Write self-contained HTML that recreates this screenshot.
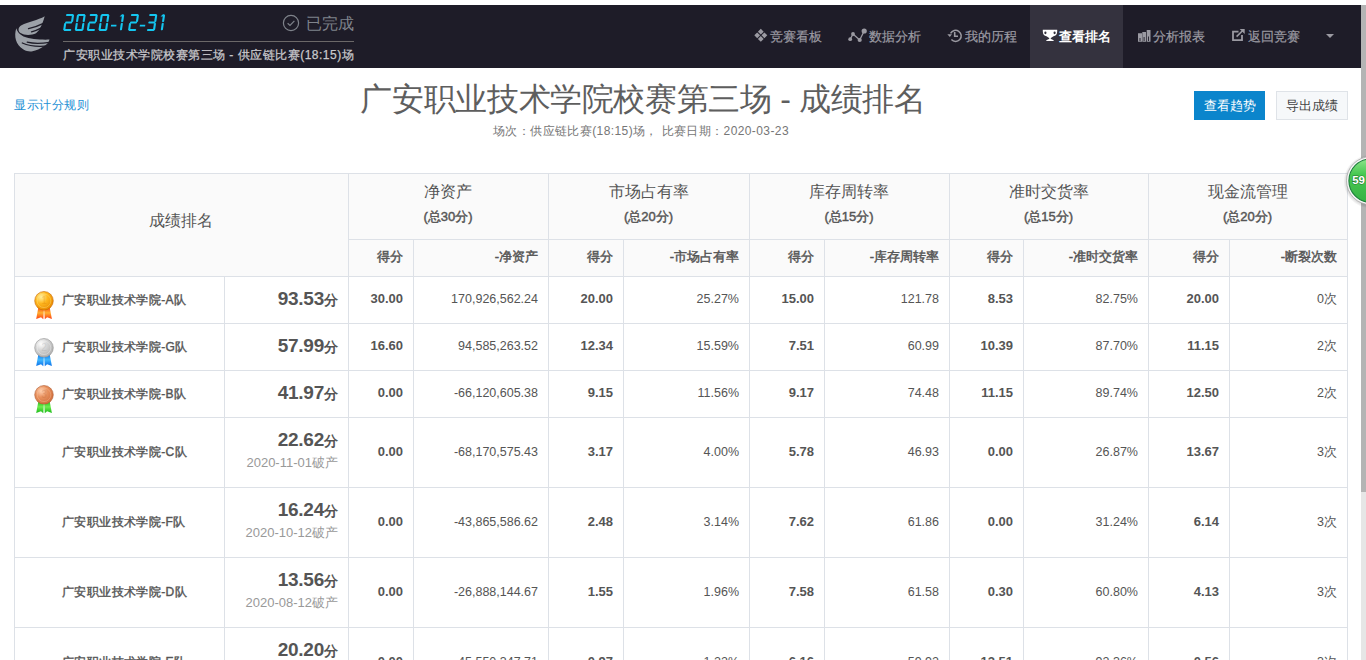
<!DOCTYPE html>
<html><head><meta charset="utf-8"><style>
*{margin:0;padding:0;box-sizing:border-box}
html,body{width:1366px;height:660px;overflow:hidden;background:#fff;font-family:"Liberation Sans", sans-serif}
.a{position:absolute;white-space:nowrap}
.hl{position:absolute;height:1px;background:#dde1e7}
.vl{position:absolute;width:1px;background:#dde1e7}
.r{text-align:right}
.c{text-align:center}
</style></head><body>

<div class="a" style="left:0;top:5px;width:1361px;height:63px;background:#1e1c28"></div>
<div class="a" style="left:1030px;top:5px;width:93px;height:63px;background:#34323e"></div>
<div class="a" style="left:1361px;top:5px;width:5px;height:655px;background:#e6e6e6"></div>
<div class="a" style="left:1361px;top:5px;width:5px;height:487px;background:#b4b4b4"></div>
<svg class="a" style="left:10px;top:12px" width="44" height="44" viewBox="0 0 44 44">
<g fill="#9ca1a8">
<path d="M34.7 4.3 C28 8.2 18 10.2 11.5 13.2 C8 15 7.6 19 10.5 21 C14.5 23.6 21.5 23.4 26 21.2 C29.5 18.8 32.2 13 34.7 4.3Z"/>
<path d="M6.3 16.3 C3.8 24 5.5 33 13.5 37.5 C16.5 39.3 19.5 39.8 22.5 39.3 C26 38.5 30.5 36.5 33.5 34.4 C35.5 33 37.5 31.5 38.2 30.4 C38.8 29.5 39.3 28.5 39.5 27.6 C31 27.8 20.5 27.5 13.5 24.5 C9.5 22.6 7.3 19.8 6.3 16.3Z"/>
</g>
<g fill="none" stroke="#1e1c28" stroke-width="1.3" stroke-linecap="round">
<path d="M18.5 16.6 C23 15.6 29 13.8 34 11.2"/>
<path d="M21.5 19.9 C24 19.2 28 17.6 31.5 15.8"/>
<path d="M12.3 31 C18 33.6 26 34.8 35 34.2"/>
<path d="M17.2 30.2 C22 31.4 30 31.8 39.5 30.4"/>
</g></svg>
<svg class="a" style="left:0;top:0" width="180" height="40" fill="#14c6f0"><polygon points="65.89,15.05 66.75,14.00 73.05,14.00 73.59,15.05 72.73,16.10 66.44,16.10"/><polygon points="73.11,14.60 74.06,15.30 73.12,21.50 71.97,22.20 71.02,21.50 71.95,15.30"/><polygon points="64.98,22.50 65.83,21.45 71.73,21.45 72.28,22.50 71.42,23.55 65.52,23.55"/><polygon points="65.28,22.80 66.22,23.50 65.29,29.70 64.14,30.40 63.20,29.70 64.12,23.50"/><polygon points="63.66,29.95 64.52,28.90 70.81,28.90 71.36,29.95 70.50,31.00 64.20,31.00"/><polygon points="77.49,15.05 78.35,14.00 84.65,14.00 85.19,15.05 84.33,16.10 78.03,16.10"/><polygon points="84.71,14.60 85.66,15.30 84.72,21.50 83.57,22.20 82.62,21.50 83.55,15.30"/><polygon points="83.48,22.80 84.42,23.50 83.49,29.70 82.34,30.40 81.39,29.70 82.32,23.50"/><polygon points="75.26,29.95 76.11,28.90 82.41,28.90 82.96,29.95 82.10,31.00 75.80,31.00"/><polygon points="76.88,22.80 77.82,23.50 76.89,29.70 75.74,30.40 74.79,29.70 75.72,23.50"/><polygon points="78.11,14.60 79.05,15.30 78.12,21.50 76.97,22.20 76.02,21.50 76.95,15.30"/><polygon points="89.59,15.05 90.45,14.00 96.75,14.00 97.29,15.05 96.44,16.10 90.14,16.10"/><polygon points="96.81,14.60 97.76,15.30 96.83,21.50 95.67,22.20 94.72,21.50 95.66,15.30"/><polygon points="88.68,22.50 89.53,21.45 95.43,21.45 95.98,22.50 95.12,23.55 89.22,23.55"/><polygon points="88.98,22.80 89.92,23.50 88.99,29.70 87.84,30.40 86.89,29.70 87.83,23.50"/><polygon points="87.36,29.95 88.22,28.90 94.52,28.90 95.06,29.95 94.20,31.00 87.90,31.00"/><polygon points="101.19,15.05 102.05,14.00 108.35,14.00 108.89,15.05 108.03,16.10 101.73,16.10"/><polygon points="108.41,14.60 109.36,15.30 108.42,21.50 107.27,22.20 106.32,21.50 107.25,15.30"/><polygon points="107.18,22.80 108.12,23.50 107.19,29.70 106.04,30.40 105.09,29.70 106.02,23.50"/><polygon points="98.96,29.95 99.81,28.90 106.11,28.90 106.66,29.95 105.80,31.00 99.50,31.00"/><polygon points="100.58,22.80 101.52,23.50 100.59,29.70 99.44,30.40 98.49,29.70 99.42,23.50"/><polygon points="101.81,14.60 102.75,15.30 101.82,21.50 100.67,22.20 99.72,21.50 100.66,15.30"/><polygon points="111.13,24.80 116.53,24.80 116.29,26.40 110.89,26.40"/><polygon points="123.21,14.60 124.16,15.30 123.22,21.50 122.07,22.20 121.12,21.50 122.05,15.30"/><polygon points="121.98,22.80 122.92,23.50 121.99,29.70 120.84,30.40 119.89,29.70 120.82,23.50"/><polygon points="122.02,14.20 123.72,14.20 121.86,16.60 119.66,16.60"/><polygon points="130.79,15.05 131.65,14.00 137.95,14.00 138.49,15.05 137.64,16.10 131.34,16.10"/><polygon points="138.01,14.60 138.95,15.30 138.03,21.50 136.87,22.20 135.93,21.50 136.85,15.30"/><polygon points="129.88,22.50 130.73,21.45 136.63,21.45 137.18,22.50 136.32,23.55 130.42,23.55"/><polygon points="130.18,22.80 131.12,23.50 130.19,29.70 129.04,30.40 128.09,29.70 129.03,23.50"/><polygon points="128.56,29.95 129.41,28.90 135.72,28.90 136.26,29.95 135.40,31.00 129.10,31.00"/><polygon points="139.93,24.80 145.33,24.80 145.09,26.40 139.69,26.40"/><polygon points="149.09,15.05 149.95,14.00 156.25,14.00 156.79,15.05 155.94,16.10 149.63,16.10"/><polygon points="156.31,14.60 157.25,15.30 156.32,21.50 155.17,22.20 154.22,21.50 155.15,15.30"/><polygon points="148.17,22.50 149.03,21.45 154.93,21.45 155.47,22.50 154.62,23.55 148.72,23.55"/><polygon points="155.08,22.80 156.02,23.50 155.09,29.70 153.94,30.40 152.99,29.70 153.92,23.50"/><polygon points="146.86,29.95 147.71,28.90 154.01,28.90 154.56,29.95 153.70,31.00 147.40,31.00"/><polygon points="164.11,14.60 165.05,15.30 164.12,21.50 162.97,22.20 162.03,21.50 162.95,15.30"/><polygon points="162.88,22.80 163.82,23.50 162.89,29.70 161.74,30.40 160.79,29.70 161.72,23.50"/><polygon points="162.92,14.20 164.62,14.20 162.76,16.60 160.56,16.60"/></svg>
<svg class="a" style="left:282px;top:14px" width="18" height="18" viewBox="0 0 18 18"><circle cx="9" cy="9" r="7.6" fill="none" stroke="#7f838b" stroke-width="1.2"/><path d="M5.6 9.2 L8 11.4 L12.4 6.8" fill="none" stroke="#7f838b" stroke-width="1.2"/></svg>
<div class="a" style="left:306px;top:13px;font-size:16px;line-height:22px;color:#7f838b">已完成</div>
<div class="a" style="left:63px;top:41px;width:291px;height:1px;background:#6b6868"></div>
<div class="a" style="left:63px;top:46px;font-size:12px;letter-spacing:0.5px;line-height:18px;color:#c9c9cc;-webkit-text-stroke:0.25px #c9c9cc">广安职业技术学院校赛第三场 - 供应链比赛(18:15)场</div>
<div class="a" style="left:770px;top:28px;font-size:13px;line-height:18px;color:#9b9aa2;-webkit-text-stroke:0.2px #9b9aa2">竞赛看板</div>
<div class="a" style="left:869px;top:28px;font-size:13px;line-height:18px;color:#9b9aa2;-webkit-text-stroke:0.2px #9b9aa2">数据分析</div>
<div class="a" style="left:965px;top:28px;font-size:13px;line-height:18px;color:#9b9aa2;-webkit-text-stroke:0.2px #9b9aa2">我的历程</div>
<div class="a" style="left:1059px;top:28px;font-size:13px;line-height:18px;color:#fff;font-weight:bold">查看排名</div>
<div class="a" style="left:1153px;top:28px;font-size:13px;line-height:18px;color:#9b9aa2;-webkit-text-stroke:0.2px #9b9aa2">分析报表</div>
<div class="a" style="left:1248px;top:28px;font-size:13px;line-height:18px;color:#9b9aa2;-webkit-text-stroke:0.2px #9b9aa2">返回竞赛</div>
<svg class="a" style="left:750px;top:24px" width="24" height="22" viewBox="0 0 24 22" fill="#9b9aa2"><path d="M10.8 4.8 L13.7 7.7 L10.8 10.6 L7.9 7.7Z M7.2 8.4 L10.1 11.3 L7.2 14.2 L4.3 11.3Z M14.4 8.4 L17.3 11.3 L14.4 14.2 L11.5 11.3Z M10.8 12 L13.7 14.9 L10.8 17.8 L7.9 14.9Z"/></svg>
<svg class="a" style="left:844px;top:24px" width="26" height="22" viewBox="0 0 26 22"><path d="M6.2 15.2 L9 10 L15.7 16 L20.2 7" fill="none" stroke="#9b9aa2" stroke-width="1.3"/><circle cx="6.2" cy="15.2" r="1.9" fill="#9b9aa2"/><circle cx="9" cy="10" r="1.9" fill="#9b9aa2"/><circle cx="15.7" cy="16" r="2.1" fill="#9b9aa2"/><circle cx="20.2" cy="7" r="2.6" fill="#9b9aa2"/></svg>
<svg class="a" style="left:944px;top:24px" width="22" height="22" viewBox="0 0 22 22"><path d="M6.6 9.4 A5.6 5.6 0 1 1 7.4 15.6" fill="none" stroke="#9b9aa2" stroke-width="1.5"/><path d="M3.3 10.2 L8 10.2 L5.8 13Z" fill="#9b9aa2"/><path d="M10.7 8 V12.3 H14" fill="none" stroke="#9b9aa2" stroke-width="1.6"/></svg>
<svg class="a" style="left:1038px;top:24px" width="22" height="22" viewBox="0 0 22 22" fill="#fff" fill-rule="evenodd"><path d="M4.8 5.8 H19.2 V7.5 C19.2 10.5 17.5 12 15.5 12.3 C14.5 13.2 13.3 13.8 12.8 14 V15 C14 15.3 15.5 16 16 17 H8 C8.5 16 10 15.3 11.2 15 V14 C10.7 13.8 9.5 13.2 8.5 12.3 C6.5 12 4.8 10.5 4.8 7.5 Z M6.3 8.8 A1.1 1.4 0 1 0 8.5 8.8 A1.1 1.4 0 1 0 6.3 8.8Z M15.5 8.8 A1.1 1.4 0 1 0 17.7 8.8 A1.1 1.4 0 1 0 15.5 8.8Z"/></svg>
<svg class="a" style="left:1134px;top:24px" width="22" height="22" viewBox="0 0 22 22"><path d="M4 9.3 H8 V17.8 H4Z M8.3 7.9 H12 V17.8 H8.3Z M12.7 6 H16.5 V17.8 H12.7Z" fill="#9b9aa2"/><path d="M6 14 V17 M10.1 13 V17 M14.5 12.5 V17" stroke="#1e1c28" stroke-width="0.9"/></svg>
<svg class="a" style="left:1228px;top:24px" width="22" height="22" viewBox="0 0 22 22"><path d="M10.5 7.7 H5 V16.1 H14 V11" fill="none" stroke="#9b9aa2" stroke-width="1.8"/><path d="M8.6 12.6 L15.5 5.8" stroke="#9b9aa2" stroke-width="1.6"/><path d="M11.7 5 H16.7 V10Z" fill="#9b9aa2"/></svg>
<svg class="a" style="left:1326px;top:34px" width="8" height="4" viewBox="0 0 8 4"><path d="M0 0 H8 L4 4Z" fill="#9b9aa2"/></svg>
<div class="a" style="left:14px;top:96px;font-size:12px;letter-spacing:0.6px;line-height:18px;color:#1c8fd4">显示计分规则</div>
<div class="a c" style="left:2px;width:1282px;top:78px;font-size:32px;letter-spacing:-0.35px;line-height:42px;color:#5e5e5e">广安职业技术学院校赛第三场 - 成绩排名</div>
<div class="a c" style="left:0;width:1282px;top:123px;font-size:12px;letter-spacing:0.4px;line-height:17px;color:#767676">场次：供应链比赛(18:15)场， 比赛日期：2020-03-23</div>
<div class="a c" style="left:1194px;top:91px;width:71px;height:29px;background:#0b85cc;color:#fff;font-size:13px;line-height:29px">查看趋势</div>
<div class="a c" style="left:1276px;top:91px;width:72px;height:29px;background:#f6f8fa;border:1px solid #dfe3e8;color:#444;font-size:13px;line-height:27px">导出成绩</div>
<div class="a" style="left:14px;top:173px;width:1334px;height:103px;background:#fafafa"></div>
<div class="hl" style="left:14px;top:173px;width:1334px"></div>
<div class="hl" style="left:348px;top:239px;width:1000px"></div>
<div class="hl" style="left:14px;top:276px;width:1334px"></div>
<div class="hl" style="left:14px;top:323px;width:1334px"></div>
<div class="hl" style="left:14px;top:370px;width:1334px"></div>
<div class="hl" style="left:14px;top:417px;width:1334px"></div>
<div class="hl" style="left:14px;top:487px;width:1334px"></div>
<div class="hl" style="left:14px;top:557px;width:1334px"></div>
<div class="hl" style="left:14px;top:627px;width:1334px"></div>
<div class="hl" style="left:14px;top:697px;width:1334px"></div>
<div class="vl" style="left:14px;top:173px;height:500px"></div>
<div class="vl" style="left:224px;top:276px;height:400px"></div>
<div class="vl" style="left:348px;top:173px;height:500px"></div>
<div class="vl" style="left:413px;top:239px;height:440px"></div>
<div class="vl" style="left:548px;top:173px;height:500px"></div>
<div class="vl" style="left:623px;top:239px;height:440px"></div>
<div class="vl" style="left:749px;top:173px;height:500px"></div>
<div class="vl" style="left:824px;top:239px;height:440px"></div>
<div class="vl" style="left:949px;top:173px;height:500px"></div>
<div class="vl" style="left:1023px;top:239px;height:440px"></div>
<div class="vl" style="left:1148px;top:173px;height:500px"></div>
<div class="vl" style="left:1229px;top:239px;height:440px"></div>
<div class="vl" style="left:1347px;top:173px;height:500px"></div>
<div class="a c" style="left:14px;width:334px;top:211px;font-size:16px;line-height:20px;color:#555">成绩排名</div>
<div class="a c" style="left:348px;width:200px;top:182px;font-size:16px;line-height:20px;color:#555">净资产</div>
<div class="a c" style="left:348px;width:200px;top:208px;font-size:13px;line-height:18px;color:#555;-webkit-text-stroke:0.45px #555">(总30分)</div>
<div class="a r" style="left:348px;width:55px;top:248px;font-size:13px;line-height:18px;color:#555;-webkit-text-stroke:0.45px #555">得分</div>
<div class="a r" style="left:413px;width:125px;top:248px;font-size:13px;line-height:18px;color:#555;-webkit-text-stroke:0.45px #555">-净资产</div>
<div class="a c" style="left:548px;width:201px;top:182px;font-size:16px;line-height:20px;color:#555">市场占有率</div>
<div class="a c" style="left:548px;width:201px;top:208px;font-size:13px;line-height:18px;color:#555;-webkit-text-stroke:0.45px #555">(总20分)</div>
<div class="a r" style="left:548px;width:65px;top:248px;font-size:13px;line-height:18px;color:#555;-webkit-text-stroke:0.45px #555">得分</div>
<div class="a r" style="left:623px;width:116px;top:248px;font-size:13px;line-height:18px;color:#555;-webkit-text-stroke:0.45px #555">-市场占有率</div>
<div class="a c" style="left:749px;width:200px;top:182px;font-size:16px;line-height:20px;color:#555">库存周转率</div>
<div class="a c" style="left:749px;width:200px;top:208px;font-size:13px;line-height:18px;color:#555;-webkit-text-stroke:0.45px #555">(总15分)</div>
<div class="a r" style="left:749px;width:65px;top:248px;font-size:13px;line-height:18px;color:#555;-webkit-text-stroke:0.45px #555">得分</div>
<div class="a r" style="left:824px;width:115px;top:248px;font-size:13px;line-height:18px;color:#555;-webkit-text-stroke:0.45px #555">-库存周转率</div>
<div class="a c" style="left:949px;width:199px;top:182px;font-size:16px;line-height:20px;color:#555">准时交货率</div>
<div class="a c" style="left:949px;width:199px;top:208px;font-size:13px;line-height:18px;color:#555;-webkit-text-stroke:0.45px #555">(总15分)</div>
<div class="a r" style="left:949px;width:64px;top:248px;font-size:13px;line-height:18px;color:#555;-webkit-text-stroke:0.45px #555">得分</div>
<div class="a r" style="left:1023px;width:115px;top:248px;font-size:13px;line-height:18px;color:#555;-webkit-text-stroke:0.45px #555">-准时交货率</div>
<div class="a c" style="left:1148px;width:199px;top:182px;font-size:16px;line-height:20px;color:#555">现金流管理</div>
<div class="a c" style="left:1148px;width:199px;top:208px;font-size:13px;line-height:18px;color:#555;-webkit-text-stroke:0.45px #555">(总20分)</div>
<div class="a r" style="left:1148px;width:71px;top:248px;font-size:13px;line-height:18px;color:#555;-webkit-text-stroke:0.45px #555">得分</div>
<div class="a r" style="left:1229px;width:108px;top:248px;font-size:13px;line-height:18px;color:#555;-webkit-text-stroke:0.45px #555">-断裂次数</div>
<div class="a" style="left:62px;top:291px;font-size:12px;letter-spacing:0.4px;line-height:18px;color:#555;-webkit-text-stroke:0.4px #555">广安职业技术学院-A队</div>
<div class="a r" style="left:224px;width:114px;top:287px;font-size:19px;line-height:24px;color:#555;font-weight:bold;letter-spacing:-0.25px">93.53<span style="font-size:14px;letter-spacing:0">分</span></div>
<div class="a r" style="left:348px;width:55px;top:290px;font-size:13px;line-height:18px;color:#555;font-weight:bold;">30.00</div>
<div class="a r" style="left:413px;width:125px;top:290px;font-size:13px;line-height:18px;color:#555;font-size:12.5px;">170,926,562.24</div>
<div class="a r" style="left:548px;width:65px;top:290px;font-size:13px;line-height:18px;color:#555;font-weight:bold;">20.00</div>
<div class="a r" style="left:623px;width:116px;top:290px;font-size:13px;line-height:18px;color:#555;font-size:12.5px;">25.27%</div>
<div class="a r" style="left:749px;width:65px;top:290px;font-size:13px;line-height:18px;color:#555;font-weight:bold;">15.00</div>
<div class="a r" style="left:824px;width:115px;top:290px;font-size:13px;line-height:18px;color:#555;font-size:12.5px;">121.78</div>
<div class="a r" style="left:949px;width:64px;top:290px;font-size:13px;line-height:18px;color:#555;font-weight:bold;">8.53</div>
<div class="a r" style="left:1023px;width:115px;top:290px;font-size:13px;line-height:18px;color:#555;font-size:12.5px;">82.75%</div>
<div class="a r" style="left:1148px;width:71px;top:290px;font-size:13px;line-height:18px;color:#555;font-weight:bold;">20.00</div>
<div class="a r" style="left:1229px;width:108px;top:290px;font-size:13px;line-height:18px;color:#555;font-size:12.5px;">0次</div>
<svg class="a" style="left:34px;top:291px" width="20" height="30" viewBox="0 0 20 30"><defs><radialGradient id="mgold" cx="0.35" cy="0.3" r="0.75"><stop offset="0" stop-color="#fff0a0"/><stop offset="0.45" stop-color="#ffb820"/><stop offset="1" stop-color="#e88a00"/></radialGradient><linearGradient id="rgold" x1="0" y1="0" x2="0" y2="1"><stop offset="0" stop-color="#ff3a10"/><stop offset="0.5" stop-color="#ffb030"/><stop offset="1" stop-color="#ff3a10"/></linearGradient></defs><path d="M4.5 15.5 L10 16.5 L9.3 28.2 L7 26.2 L2.2 28 Z M10 16.5 L15.5 15.5 L17.9 28 L13.1 26.2 L10.8 28.2 Z" fill="url(#rgold)"/><circle cx="10" cy="9.8" r="9.3" fill="url(#mgold)" stroke="#c86400" stroke-width="0.6"/><circle cx="10" cy="9.8" r="6.8" fill="none" stroke="#fff0a0" stroke-width="0.5" opacity="0.6"/><text x="10" y="13.4" text-anchor="middle" font-family="Liberation Sans" font-size="10" fill="#c86400" opacity="0.22">1</text></svg>
<div class="a" style="left:62px;top:338px;font-size:12px;letter-spacing:0.4px;line-height:18px;color:#555;-webkit-text-stroke:0.4px #555">广安职业技术学院-G队</div>
<div class="a r" style="left:224px;width:114px;top:334px;font-size:19px;line-height:24px;color:#555;font-weight:bold;letter-spacing:-0.25px">57.99<span style="font-size:14px;letter-spacing:0">分</span></div>
<div class="a r" style="left:348px;width:55px;top:337px;font-size:13px;line-height:18px;color:#555;font-weight:bold;">16.60</div>
<div class="a r" style="left:413px;width:125px;top:337px;font-size:13px;line-height:18px;color:#555;font-size:12.5px;">94,585,263.52</div>
<div class="a r" style="left:548px;width:65px;top:337px;font-size:13px;line-height:18px;color:#555;font-weight:bold;">12.34</div>
<div class="a r" style="left:623px;width:116px;top:337px;font-size:13px;line-height:18px;color:#555;font-size:12.5px;">15.59%</div>
<div class="a r" style="left:749px;width:65px;top:337px;font-size:13px;line-height:18px;color:#555;font-weight:bold;">7.51</div>
<div class="a r" style="left:824px;width:115px;top:337px;font-size:13px;line-height:18px;color:#555;font-size:12.5px;">60.99</div>
<div class="a r" style="left:949px;width:64px;top:337px;font-size:13px;line-height:18px;color:#555;font-weight:bold;">10.39</div>
<div class="a r" style="left:1023px;width:115px;top:337px;font-size:13px;line-height:18px;color:#555;font-size:12.5px;">87.70%</div>
<div class="a r" style="left:1148px;width:71px;top:337px;font-size:13px;line-height:18px;color:#555;font-weight:bold;">11.15</div>
<div class="a r" style="left:1229px;width:108px;top:337px;font-size:13px;line-height:18px;color:#555;font-size:12.5px;">2次</div>
<svg class="a" style="left:34px;top:338px" width="20" height="30" viewBox="0 0 20 30"><defs><radialGradient id="msilver" cx="0.35" cy="0.3" r="0.75"><stop offset="0" stop-color="#ffffff"/><stop offset="0.45" stop-color="#d4d4d4"/><stop offset="1" stop-color="#b0b0b0"/></radialGradient><linearGradient id="rsilver" x1="0" y1="0" x2="0" y2="1"><stop offset="0" stop-color="#0a6ee8"/><stop offset="0.5" stop-color="#40b8ff"/><stop offset="1" stop-color="#0a6ee8"/></linearGradient></defs><path d="M4.5 15.5 L10 16.5 L9.3 28.2 L7 26.2 L2.2 28 Z M10 16.5 L15.5 15.5 L17.9 28 L13.1 26.2 L10.8 28.2 Z" fill="url(#rsilver)"/><circle cx="10" cy="9.8" r="9.3" fill="url(#msilver)" stroke="#909090" stroke-width="0.6"/><circle cx="10" cy="9.8" r="6.8" fill="none" stroke="#ffffff" stroke-width="0.5" opacity="0.6"/><text x="10" y="13.4" text-anchor="middle" font-family="Liberation Sans" font-size="10" fill="#909090" opacity="0.22">2</text></svg>
<div class="a" style="left:62px;top:385px;font-size:12px;letter-spacing:0.4px;line-height:18px;color:#555;-webkit-text-stroke:0.4px #555">广安职业技术学院-B队</div>
<div class="a r" style="left:224px;width:114px;top:381px;font-size:19px;line-height:24px;color:#555;font-weight:bold;letter-spacing:-0.25px">41.97<span style="font-size:14px;letter-spacing:0">分</span></div>
<div class="a r" style="left:348px;width:55px;top:384px;font-size:13px;line-height:18px;color:#555;font-weight:bold;">0.00</div>
<div class="a r" style="left:413px;width:125px;top:384px;font-size:13px;line-height:18px;color:#555;font-size:12.5px;">-66,120,605.38</div>
<div class="a r" style="left:548px;width:65px;top:384px;font-size:13px;line-height:18px;color:#555;font-weight:bold;">9.15</div>
<div class="a r" style="left:623px;width:116px;top:384px;font-size:13px;line-height:18px;color:#555;font-size:12.5px;">11.56%</div>
<div class="a r" style="left:749px;width:65px;top:384px;font-size:13px;line-height:18px;color:#555;font-weight:bold;">9.17</div>
<div class="a r" style="left:824px;width:115px;top:384px;font-size:13px;line-height:18px;color:#555;font-size:12.5px;">74.48</div>
<div class="a r" style="left:949px;width:64px;top:384px;font-size:13px;line-height:18px;color:#555;font-weight:bold;">11.15</div>
<div class="a r" style="left:1023px;width:115px;top:384px;font-size:13px;line-height:18px;color:#555;font-size:12.5px;">89.74%</div>
<div class="a r" style="left:1148px;width:71px;top:384px;font-size:13px;line-height:18px;color:#555;font-weight:bold;">12.50</div>
<div class="a r" style="left:1229px;width:108px;top:384px;font-size:13px;line-height:18px;color:#555;font-size:12.5px;">2次</div>
<svg class="a" style="left:34px;top:385px" width="20" height="30" viewBox="0 0 20 30"><defs><radialGradient id="mbronze" cx="0.35" cy="0.3" r="0.75"><stop offset="0" stop-color="#ffd0b0"/><stop offset="0.45" stop-color="#e8915e"/><stop offset="1" stop-color="#d06e3c"/></radialGradient><linearGradient id="rbronze" x1="0" y1="0" x2="0" y2="1"><stop offset="0" stop-color="#14b814"/><stop offset="0.5" stop-color="#70ec50"/><stop offset="1" stop-color="#14b814"/></linearGradient></defs><path d="M4.5 15.5 L10 16.5 L9.3 28.2 L7 26.2 L2.2 28 Z M10 16.5 L15.5 15.5 L17.9 28 L13.1 26.2 L10.8 28.2 Z" fill="url(#rbronze)"/><circle cx="10" cy="9.8" r="9.3" fill="url(#mbronze)" stroke="#b05a30" stroke-width="0.6"/><circle cx="10" cy="9.8" r="6.8" fill="none" stroke="#ffd0b0" stroke-width="0.5" opacity="0.6"/><text x="10" y="13.4" text-anchor="middle" font-family="Liberation Sans" font-size="10" fill="#b05a30" opacity="0.22">3</text></svg>
<div class="a" style="left:62px;top:443px;font-size:12px;letter-spacing:0.4px;line-height:18px;color:#555;-webkit-text-stroke:0.4px #555">广安职业技术学院-C队</div>
<div class="a r" style="left:224px;width:114px;top:428px;font-size:19px;line-height:24px;color:#555;font-weight:bold;letter-spacing:-0.25px">22.62<span style="font-size:14px;letter-spacing:0">分</span></div>
<div class="a r" style="left:224px;width:114px;top:454px;font-size:13px;line-height:18px;color:#999">2020-11-01破产</div>
<div class="a r" style="left:348px;width:55px;top:443px;font-size:13px;line-height:18px;color:#555;font-weight:bold;">0.00</div>
<div class="a r" style="left:413px;width:125px;top:443px;font-size:13px;line-height:18px;color:#555;font-size:12.5px;">-68,170,575.43</div>
<div class="a r" style="left:548px;width:65px;top:443px;font-size:13px;line-height:18px;color:#555;font-weight:bold;">3.17</div>
<div class="a r" style="left:623px;width:116px;top:443px;font-size:13px;line-height:18px;color:#555;font-size:12.5px;">4.00%</div>
<div class="a r" style="left:749px;width:65px;top:443px;font-size:13px;line-height:18px;color:#555;font-weight:bold;">5.78</div>
<div class="a r" style="left:824px;width:115px;top:443px;font-size:13px;line-height:18px;color:#555;font-size:12.5px;">46.93</div>
<div class="a r" style="left:949px;width:64px;top:443px;font-size:13px;line-height:18px;color:#555;font-weight:bold;">0.00</div>
<div class="a r" style="left:1023px;width:115px;top:443px;font-size:13px;line-height:18px;color:#555;font-size:12.5px;">26.87%</div>
<div class="a r" style="left:1148px;width:71px;top:443px;font-size:13px;line-height:18px;color:#555;font-weight:bold;">13.67</div>
<div class="a r" style="left:1229px;width:108px;top:443px;font-size:13px;line-height:18px;color:#555;font-size:12.5px;">3次</div>
<div class="a" style="left:62px;top:513px;font-size:12px;letter-spacing:0.4px;line-height:18px;color:#555;-webkit-text-stroke:0.4px #555">广安职业技术学院-F队</div>
<div class="a r" style="left:224px;width:114px;top:498px;font-size:19px;line-height:24px;color:#555;font-weight:bold;letter-spacing:-0.25px">16.24<span style="font-size:14px;letter-spacing:0">分</span></div>
<div class="a r" style="left:224px;width:114px;top:524px;font-size:13px;line-height:18px;color:#999">2020-10-12破产</div>
<div class="a r" style="left:348px;width:55px;top:513px;font-size:13px;line-height:18px;color:#555;font-weight:bold;">0.00</div>
<div class="a r" style="left:413px;width:125px;top:513px;font-size:13px;line-height:18px;color:#555;font-size:12.5px;">-43,865,586.62</div>
<div class="a r" style="left:548px;width:65px;top:513px;font-size:13px;line-height:18px;color:#555;font-weight:bold;">2.48</div>
<div class="a r" style="left:623px;width:116px;top:513px;font-size:13px;line-height:18px;color:#555;font-size:12.5px;">3.14%</div>
<div class="a r" style="left:749px;width:65px;top:513px;font-size:13px;line-height:18px;color:#555;font-weight:bold;">7.62</div>
<div class="a r" style="left:824px;width:115px;top:513px;font-size:13px;line-height:18px;color:#555;font-size:12.5px;">61.86</div>
<div class="a r" style="left:949px;width:64px;top:513px;font-size:13px;line-height:18px;color:#555;font-weight:bold;">0.00</div>
<div class="a r" style="left:1023px;width:115px;top:513px;font-size:13px;line-height:18px;color:#555;font-size:12.5px;">31.24%</div>
<div class="a r" style="left:1148px;width:71px;top:513px;font-size:13px;line-height:18px;color:#555;font-weight:bold;">6.14</div>
<div class="a r" style="left:1229px;width:108px;top:513px;font-size:13px;line-height:18px;color:#555;font-size:12.5px;">3次</div>
<div class="a" style="left:62px;top:583px;font-size:12px;letter-spacing:0.4px;line-height:18px;color:#555;-webkit-text-stroke:0.4px #555">广安职业技术学院-D队</div>
<div class="a r" style="left:224px;width:114px;top:568px;font-size:19px;line-height:24px;color:#555;font-weight:bold;letter-spacing:-0.25px">13.56<span style="font-size:14px;letter-spacing:0">分</span></div>
<div class="a r" style="left:224px;width:114px;top:594px;font-size:13px;line-height:18px;color:#999">2020-08-12破产</div>
<div class="a r" style="left:348px;width:55px;top:583px;font-size:13px;line-height:18px;color:#555;font-weight:bold;">0.00</div>
<div class="a r" style="left:413px;width:125px;top:583px;font-size:13px;line-height:18px;color:#555;font-size:12.5px;">-26,888,144.67</div>
<div class="a r" style="left:548px;width:65px;top:583px;font-size:13px;line-height:18px;color:#555;font-weight:bold;">1.55</div>
<div class="a r" style="left:623px;width:116px;top:583px;font-size:13px;line-height:18px;color:#555;font-size:12.5px;">1.96%</div>
<div class="a r" style="left:749px;width:65px;top:583px;font-size:13px;line-height:18px;color:#555;font-weight:bold;">7.58</div>
<div class="a r" style="left:824px;width:115px;top:583px;font-size:13px;line-height:18px;color:#555;font-size:12.5px;">61.58</div>
<div class="a r" style="left:949px;width:64px;top:583px;font-size:13px;line-height:18px;color:#555;font-weight:bold;">0.30</div>
<div class="a r" style="left:1023px;width:115px;top:583px;font-size:13px;line-height:18px;color:#555;font-size:12.5px;">60.80%</div>
<div class="a r" style="left:1148px;width:71px;top:583px;font-size:13px;line-height:18px;color:#555;font-weight:bold;">4.13</div>
<div class="a r" style="left:1229px;width:108px;top:583px;font-size:13px;line-height:18px;color:#555;font-size:12.5px;">3次</div>
<div class="a" style="left:62px;top:653px;font-size:12px;letter-spacing:0.4px;line-height:18px;color:#555;-webkit-text-stroke:0.4px #555">广安职业技术学院-E队</div>
<div class="a r" style="left:224px;width:114px;top:638px;font-size:19px;line-height:24px;color:#555;font-weight:bold;letter-spacing:-0.25px">20.20<span style="font-size:14px;letter-spacing:0">分</span></div>
<div class="a r" style="left:224px;width:114px;top:664px;font-size:13px;line-height:18px;color:#999">2020-09-15破产</div>
<div class="a r" style="left:348px;width:55px;top:653px;font-size:13px;line-height:18px;color:#555;font-weight:bold;">0.00</div>
<div class="a r" style="left:413px;width:125px;top:653px;font-size:13px;line-height:18px;color:#555;font-size:12.5px;">-45,550,347.71</div>
<div class="a r" style="left:548px;width:65px;top:653px;font-size:13px;line-height:18px;color:#555;font-weight:bold;">0.97</div>
<div class="a r" style="left:623px;width:116px;top:653px;font-size:13px;line-height:18px;color:#555;font-size:12.5px;">1.22%</div>
<div class="a r" style="left:749px;width:65px;top:653px;font-size:13px;line-height:18px;color:#555;font-weight:bold;">6.16</div>
<div class="a r" style="left:824px;width:115px;top:653px;font-size:13px;line-height:18px;color:#555;font-size:12.5px;">59.92</div>
<div class="a r" style="left:949px;width:64px;top:653px;font-size:13px;line-height:18px;color:#555;font-weight:bold;">12.51</div>
<div class="a r" style="left:1023px;width:115px;top:653px;font-size:13px;line-height:18px;color:#555;font-size:12.5px;">92.36%</div>
<div class="a r" style="left:1148px;width:71px;top:653px;font-size:13px;line-height:18px;color:#555;font-weight:bold;">0.56</div>
<div class="a r" style="left:1229px;width:108px;top:653px;font-size:13px;line-height:18px;color:#555;font-size:12.5px;">3次</div>
<svg class="a" style="left:1340px;top:150px" width="26" height="62" viewBox="0 0 26 62"><defs><linearGradient id="gb" x1="0" y1="0" x2="0" y2="1"><stop offset="0" stop-color="#8ee48a"/><stop offset="0.35" stop-color="#48c852"/><stop offset="1" stop-color="#36b244"/></linearGradient><radialGradient id="gs" cx="0.5" cy="0.5" r="0.5"><stop offset="0.85" stop-color="#000" stop-opacity="0.18"/><stop offset="1" stop-color="#000" stop-opacity="0"/></radialGradient></defs><circle cx="30.5" cy="31.5" r="27" fill="url(#gs)"/><circle cx="30.5" cy="30.7" r="24" fill="#f6f6f6" stroke="#a8a8a8" stroke-width="0.8"/><circle cx="30.5" cy="30.7" r="21.6" fill="url(#gb)" stroke="#1b7e3a" stroke-width="1.1"/><circle cx="27" cy="17.5" r="0.8" fill="#fff" opacity="0.8"/><text x="12.2" y="34.3" style="font-family:'Liberation Sans';font-weight:bold;font-size:11.5px;paint-order:stroke" fill="#fff" stroke="#217a2e" stroke-width="1">59</text></svg>
</body></html>
